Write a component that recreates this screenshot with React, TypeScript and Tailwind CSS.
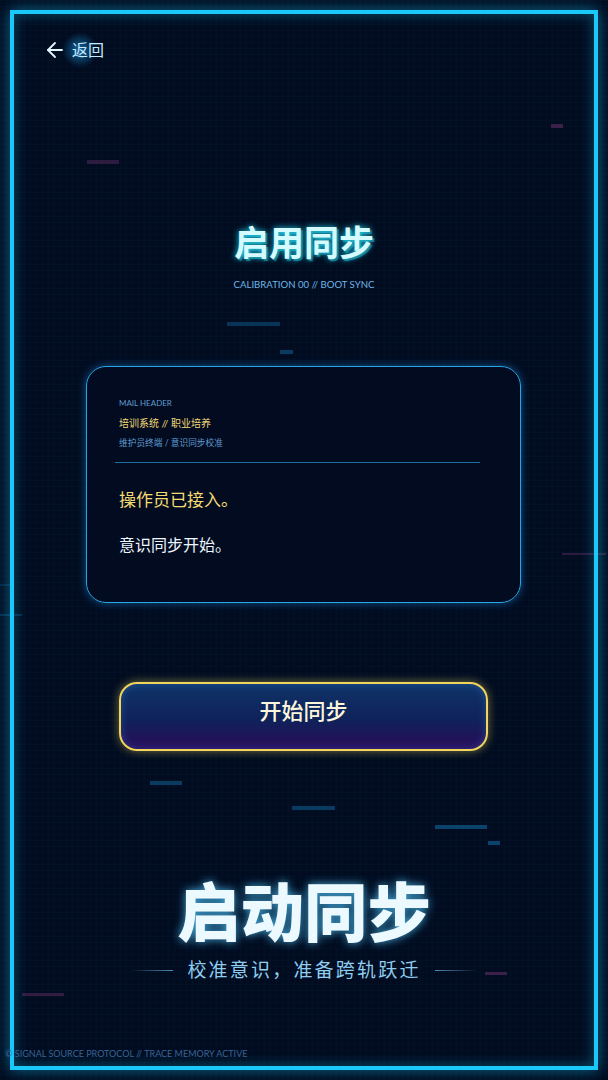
import { ArrowLeft } from "lucide-react";

const font = "font-['Lato','Noto_Sans_CJK_SC',sans-serif]";

// scattered glitch bars behind the content
const bars = [
  { x: 87, y: 160, w: 32, h: 4, c: "#5a2a5e", o: 0.5 },
  { x: 551, y: 124, w: 12, h: 4, c: "#5a2a5e", o: 0.65 },
  { x: 227, y: 322, w: 53, h: 4, c: "#0f5a8c", o: 0.5 },
  { x: 280, y: 350, w: 13, h: 4, c: "#0f5a8c", o: 0.6 },
  { x: 562, y: 553, w: 44, h: 2, c: "#5a2a5e", o: 0.5 },
  { x: 0, y: 584, w: 10, h: 2, c: "#0f5a8c", o: 0.3 },
  { x: 0, y: 614, w: 22, h: 2, c: "#0f5a8c", o: 0.4 },
  { x: 150, y: 781, w: 32, h: 4, c: "#0f5a8c", o: 0.6 },
  { x: 292, y: 806, w: 43, h: 4, c: "#0f5a8c", o: 0.6 },
  { x: 435, y: 825, w: 52, h: 4, c: "#0f5a8c", o: 0.7 },
  { x: 488, y: 841, w: 12, h: 4, c: "#0f5a8c", o: 0.7 },
  { x: 485, y: 972, w: 22, h: 3, c: "#5a2a5e", o: 0.65 },
  { x: 22, y: 993, w: 42, h: 3, c: "#5a2a5e", o: 0.55 },
];

export default function App() {
  return (
    <div
      className={`relative h-[1080px] w-[608px] overflow-hidden bg-[#010c20] ${font}`}
    >
      {/* grid */}
      <div className="absolute inset-0 bg-[linear-gradient(rgba(60,150,220,0.025)_1px,transparent_1px),linear-gradient(90deg,rgba(60,150,220,0.025)_1px,transparent_1px)] bg-[size:6px_6px]" />
      {bars.map((b, i) => (
        <div
          key={i}
          className="absolute"
          style={{ left: b.x, top: b.y, width: b.w, height: b.h, background: b.c, opacity: b.o }}
        />
      ))}

      {/* neon frame */}
      <div className="pointer-events-none absolute left-[10px] top-[10px] h-[1060px] w-[588px] border-[4px] border-[#1bc8fa] shadow-[0_0_14px_rgba(27,200,250,0.5),inset_0_0_14px_rgba(27,200,250,0.35)]" />

      <div className="relative flex h-full flex-col items-center">
        <div className="flex h-[100px] w-full items-start pl-[43px] pt-[38px]">
          <div className="relative flex items-center gap-[5px] text-[#e4f6ff]">
            <div className="absolute left-[19px] top-[-6px] h-[36px] w-[36px] rounded-full bg-[radial-gradient(circle,rgba(30,160,240,0.6),transparent_70%)]" />
            <ArrowLeft size={24} strokeWidth={1.8} className="relative" />
            <span className="relative text-[16px] leading-[22px] text-[#c4eaff]">返回</span>
          </div>
        </div>

        <h1 className="mt-[120px] text-[35px] font-bold leading-[44px] text-[#d6fbff] [text-shadow:0_0_6px_#22d3ee,2px_2px_1px_rgba(34,180,200,0.6)]">
          启用同步
        </h1>
        <p className="mt-[13px] text-[9.6px] leading-[16px] text-[#6fb6e6]">
          CALIBRATION 00 // BOOT SYNC
        </p>

        <div className="mr-[1px] mt-[73px] flex h-[237px] w-[435px] flex-col rounded-[20px] border border-[#2ba5e6] bg-[#020b1f]/80 pl-[32px] pr-[40px] pt-[30px] shadow-[0_0_8px_rgba(30,140,230,0.55)]">
          <p className="text-[8px] leading-[12px] text-[#5f9bd2]">MAIL HEADER</p>
          <p className="mt-[7px] text-[10px] leading-[14px] text-[#f3d978]">培训系统 // 职业培养</p>
          <p className="mt-[6px] text-[8.7px] leading-[14px] text-[#5f9bd2]">维护员终端 / 意识同步校准</p>
          <div className="-ml-[4px] mt-[12px] h-px w-[365px] bg-[#1f6f9e]" />
          <p className="mt-[26px] text-[17px] leading-[22px] text-[#f5dc72]">操作员已接入。</p>
          <p className="mt-[23px] text-[16px] leading-[22px] text-[#eef6ff]">意识同步开始。</p>
        </div>

        <button className="mr-[1px] mt-[79px] flex h-[69px] w-[369px] justify-center rounded-[18px] border-2 border-[#f2d55c] bg-[linear-gradient(180deg,#0f3468_0%,#0f225a_55%,#2a0b5a_100%)] pt-[11px] shadow-[0_0_10px_rgba(242,213,92,0.5),inset_0_0_8px_rgba(60,130,220,0.4)]">
          <span className="text-[22px] font-medium leading-[32px] text-[#fbf6dc]">开始同步</span>
        </button>

        <h2 className="mt-[121px] text-[63.5px] font-black leading-[80px] text-[#ecf9ff] [text-shadow:0_0_10px_rgba(80,200,255,0.85)]">
          启动同步
        </h2>
        <div className="mt-[5px] flex items-center gap-[14px]">
          <div className="h-px w-[43px] bg-[linear-gradient(90deg,transparent,#4f8fb8)]" />
          <span className="text-[19px] leading-[26px] tracking-[2.2px] text-[#8fcdf0]">校准意识，准备跨轨跃迁</span>
          <div className="h-px w-[43px] bg-[linear-gradient(90deg,#4f8fb8,transparent)]" />
        </div>
      </div>

      <div className="absolute left-[5px] top-[1047px] text-[9px] leading-[14px] text-[#3a6496]">
        © SIGNAL SOURCE PROTOCOL // TRACE MEMORY ACTIVE
      </div>
    </div>
  );
}
